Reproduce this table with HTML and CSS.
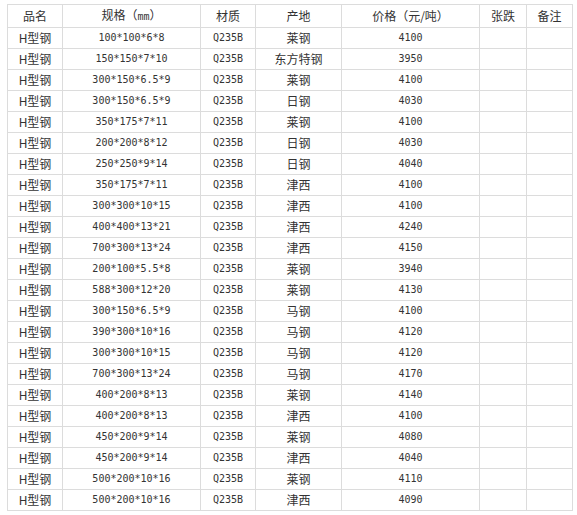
FILE: index.html
```html
<!DOCTYPE html>
<html lang="zh">
<head>
<meta charset="utf-8">
<title>H型钢价格</title>
<link rel="stylesheet" href="styles.css">
</head>
<body>
<table class="price">
  <colgroup>
    <col class="c1"><col class="c2"><col class="c3"><col class="c4"><col class="c5"><col class="c6"><col class="c7">
  </colgroup>
  <thead>
    <tr><th>品名</th><th>规格（<span class="num">mm</span>）</th><th>材质</th><th>产地</th><th>价格（元/吨）</th><th>张跌</th><th>备注</th></tr>
  </thead>
  <tbody>
    <tr><td>H型钢</td><td class="num">100*100*6*8</td><td class="num">Q235B</td><td>莱钢</td><td class="num">4100</td><td></td><td></td></tr>
    <tr><td>H型钢</td><td class="num">150*150*7*10</td><td class="num">Q235B</td><td>东方特钢</td><td class="num">3950</td><td></td><td></td></tr>
    <tr><td>H型钢</td><td class="num">300*150*6.5*9</td><td class="num">Q235B</td><td>莱钢</td><td class="num">4100</td><td></td><td></td></tr>
    <tr><td>H型钢</td><td class="num">300*150*6.5*9</td><td class="num">Q235B</td><td>日钢</td><td class="num">4030</td><td></td><td></td></tr>
    <tr><td>H型钢</td><td class="num">350*175*7*11</td><td class="num">Q235B</td><td>莱钢</td><td class="num">4100</td><td></td><td></td></tr>
    <tr><td>H型钢</td><td class="num">200*200*8*12</td><td class="num">Q235B</td><td>日钢</td><td class="num">4030</td><td></td><td></td></tr>
    <tr><td>H型钢</td><td class="num">250*250*9*14</td><td class="num">Q235B</td><td>日钢</td><td class="num">4040</td><td></td><td></td></tr>
    <tr><td>H型钢</td><td class="num">350*175*7*11</td><td class="num">Q235B</td><td>津西</td><td class="num">4100</td><td></td><td></td></tr>
    <tr><td>H型钢</td><td class="num">300*300*10*15</td><td class="num">Q235B</td><td>津西</td><td class="num">4100</td><td></td><td></td></tr>
    <tr><td>H型钢</td><td class="num">400*400*13*21</td><td class="num">Q235B</td><td>津西</td><td class="num">4240</td><td></td><td></td></tr>
    <tr><td>H型钢</td><td class="num">700*300*13*24</td><td class="num">Q235B</td><td>津西</td><td class="num">4150</td><td></td><td></td></tr>
    <tr><td>H型钢</td><td class="num">200*100*5.5*8</td><td class="num">Q235B</td><td>莱钢</td><td class="num">3940</td><td></td><td></td></tr>
    <tr><td>H型钢</td><td class="num">588*300*12*20</td><td class="num">Q235B</td><td>莱钢</td><td class="num">4130</td><td></td><td></td></tr>
    <tr><td>H型钢</td><td class="num">300*150*6.5*9</td><td class="num">Q235B</td><td>马钢</td><td class="num">4100</td><td></td><td></td></tr>
    <tr><td>H型钢</td><td class="num">390*300*10*16</td><td class="num">Q235B</td><td>马钢</td><td class="num">4120</td><td></td><td></td></tr>
    <tr><td>H型钢</td><td class="num">300*300*10*15</td><td class="num">Q235B</td><td>马钢</td><td class="num">4120</td><td></td><td></td></tr>
    <tr><td>H型钢</td><td class="num">700*300*13*24</td><td class="num">Q235B</td><td>马钢</td><td class="num">4170</td><td></td><td></td></tr>
    <tr><td>H型钢</td><td class="num">400*200*8*13</td><td class="num">Q235B</td><td>莱钢</td><td class="num">4140</td><td></td><td></td></tr>
    <tr><td>H型钢</td><td class="num">400*200*8*13</td><td class="num">Q235B</td><td>津西</td><td class="num">4100</td><td></td><td></td></tr>
    <tr><td>H型钢</td><td class="num">450*200*9*14</td><td class="num">Q235B</td><td>莱钢</td><td class="num">4080</td><td></td><td></td></tr>
    <tr><td>H型钢</td><td class="num">450*200*9*14</td><td class="num">Q235B</td><td>津西</td><td class="num">4040</td><td></td><td></td></tr>
    <tr><td>H型钢</td><td class="num">500*200*10*16</td><td class="num">Q235B</td><td>莱钢</td><td class="num">4110</td><td></td><td></td></tr>
    <tr><td>H型钢</td><td class="num">500*200*10*16</td><td class="num">Q235B</td><td>津西</td><td class="num">4090</td><td></td><td></td></tr>
  </tbody>
</table>
</body>
</html>
```

FILE: styles.css
```css
html, body {
  margin: 0;
  padding: 0;
  background: #ffffff;
}
body {
  padding: 4px 0 0 7px;
  font-family: "Noto Sans CJK SC", "Noto Sans", sans-serif;
  font-size: 12px;
  color: #333333;
}
.price {
  border-collapse: collapse;
  table-layout: fixed;
  width: 565px;
}
.c1 { width: 55px; }
.c2 { width: 138px; }
.c3 { width: 55px; }
.c4 { width: 86px; }
.c5 { width: 138px; }
.c6 { width: 47px; }
.c7 { width: 46px; }
.price th,
.price td {
  border: 1px solid #dcdcdc;
  height: 20px;
  padding: 0;
  line-height: 20px;
  text-align: center;
  font-weight: normal;
  white-space: nowrap;
  overflow: hidden;
}
.num {
  font-family: "DejaVu Sans Mono", "Liberation Mono", monospace;
  font-size: 10px;
}
.price th .num {
  font-size: 10px;
}
```
